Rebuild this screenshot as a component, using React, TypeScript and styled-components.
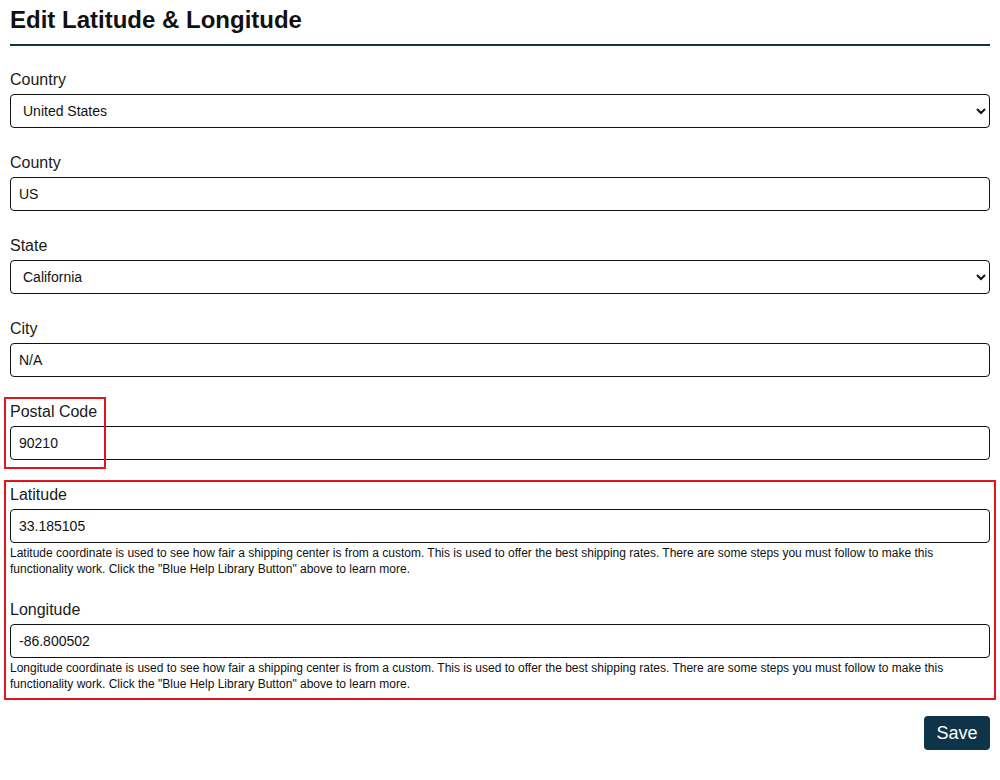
import React from 'react';
import styled, { createGlobalStyle } from 'styled-components';

const GlobalStyle = createGlobalStyle`
  html, body {
    margin: 0;
    padding: 0;
    background: #ffffff;
    font-family: Arial, "Liberation Sans", sans-serif;
    color: #111;
  }
  * {
    box-sizing: border-box;
  }
`;

const Page = styled.div`
  padding: 6px 10px 20px;
`;

const Title = styled.h2`
  margin: 0;
  padding-bottom: 10px;
  font-size: 24px;
  line-height: 28px;
  font-weight: 700;
  color: #111;
  border-bottom: 2px solid #123447;
`;

const Form = styled.form`
  display: flex;
  flex-direction: column;
  padding-top: 25px;
`;

const Field = styled.div<{ $gap?: number }>`
  position: relative;
  display: flex;
  flex-direction: column;
  margin-top: ${(p) => p.$gap ?? 26}px;
  &:first-child {
    margin-top: 0;
  }
`;

const Label = styled.label`
  font-size: 16px;
  line-height: 18px;
  color: #1a1a1a;
  margin-bottom: 5px;
`;

const TextInput = styled.input`
  height: 34px;
  width: 100%;
  padding: 0 8px;
  font-family: Arial, "Liberation Sans", sans-serif;
  font-size: 14px;
  color: #111;
  border: 1px solid #111;
  border-radius: 4px;
  background: #fff;
  outline: none;
`;

const Select = styled.select`
  height: 34px;
  width: 100%;
  padding: 0 4px 0 8px;
  font-family: Arial, "Liberation Sans", sans-serif;
  font-size: 14px;
  color: #111;
  border: 1px solid #111;
  border-radius: 4px;
  background: #fff;
  outline: none;
`;

const Help = styled.p`
  margin: 2px 0 0;
  font-size: 12px;
  line-height: 16px;
  color: #111;
`;

const Highlight = styled.div`
  position: absolute;
  left: -6px;
  top: -6px;
  width: 102px;
  height: 72px;
  border: 2px solid #e0161d;
  pointer-events: none;
`;

const HighlightGroup = styled.div`
  margin: 20px -6px 0;
  padding: 4px 4px 6px;
  border: 2px solid #e0161d;
  display: flex;
  flex-direction: column;
`;

const Actions = styled.div`
  display: flex;
  justify-content: flex-end;
  margin-top: 16px;
`;

const SaveButton = styled.button`
  height: 34px;
  width: 66px;
  padding: 0;
  background: #0d3449;
  color: #fff;
  border: none;
  border-radius: 4px;
  font-family: Arial, "Liberation Sans", sans-serif;
  font-size: 18px;
  cursor: pointer;
`;

const helpText = (kind: string) =>
  `${kind} coordinate is used to see how fair a shipping center is from a custom. This is used to offer the best shipping rates. There are some steps you must follow to make this functionality work. Click the "Blue Help Library Button" above to learn more.`;

export default function App() {
  return (
    <Page>
      <GlobalStyle />
      <Title>Edit Latitude &amp; Longitude</Title>
      <Form onSubmit={(e) => e.preventDefault()}>
        <Field>
          <Label>Country</Label>
          <Select defaultValue="US">
            <option value="US">United States</option>
            <option value="CA">Canada</option>
          </Select>
        </Field>
        <Field>
          <Label>County</Label>
          <TextInput defaultValue="US" />
        </Field>
        <Field>
          <Label>State</Label>
          <Select defaultValue="CA">
            <option value="CA">California</option>
            <option value="AL">Alabama</option>
          </Select>
        </Field>
        <Field>
          <Label>City</Label>
          <TextInput defaultValue="N/A" />
        </Field>
        <Field>
          <Highlight />
          <Label>Postal Code</Label>
          <TextInput defaultValue="90210" />
        </Field>
        <HighlightGroup>
          <Field $gap={0}>
            <Label>Latitude</Label>
            <TextInput defaultValue="33.185105" />
            <Help>{helpText('Latitude')}</Help>
          </Field>
          <Field $gap={24}>
            <Label>Longitude</Label>
            <TextInput defaultValue="-86.800502" />
            <Help>{helpText('Longitude')}</Help>
          </Field>
        </HighlightGroup>
        <Actions>
          <SaveButton type="submit">Save</SaveButton>
        </Actions>
      </Form>
    </Page>
  );
}
